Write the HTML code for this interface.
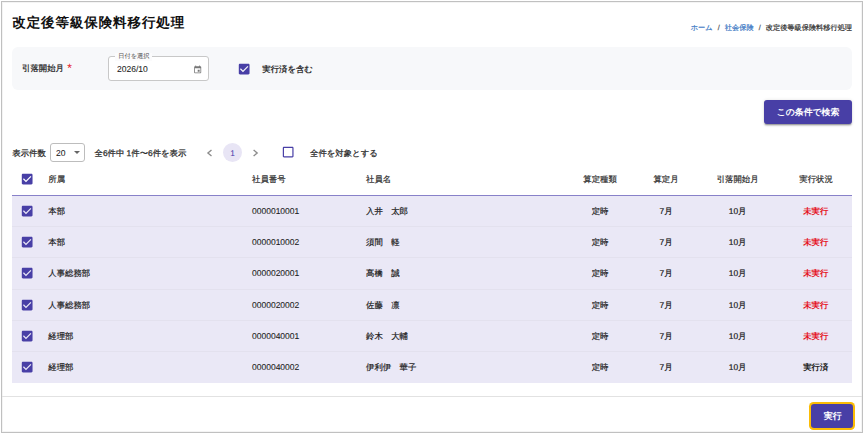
<!DOCTYPE html>
<html lang="ja">
<head>
<meta charset="utf-8">
<title>改定後等級保険料移行処理</title>
<style>
*{box-sizing:border-box;margin:0;padding:0}
html,body{width:865px;height:435px;background:#fff;overflow:hidden}
body{font-family:"Liberation Sans",sans-serif;text-rendering:geometricPrecision;-webkit-text-stroke:0.2px;color:#1c1c1c;position:relative;font-size:8.4px;line-height:1}
.abs{position:absolute;white-space:nowrap}
#frame{position:absolute;left:1px;top:1px;width:862px;height:432px;border:1px solid #c0c0c0;box-shadow:inset 0 0 0 1px #f4f4f4;background:#fff}
#title{left:12.3px;top:14.6px;font-size:13.5px;letter-spacing:0.9px;font-weight:bold;color:#111;line-height:15px}
#bc{right:13px;top:23.5px;font-size:7.2px;line-height:8px;color:#333}
#bc a{color:#3b78c4;text-decoration:none}
#bc .sep{margin:0 5.1px;color:#555}
#filter{left:12px;top:47px;width:840px;height:43px;background:#f7f8fa;border-radius:6px}
.lbl{color:#2a2a2a;-webkit-text-stroke:0.25px}
.b{font-weight:bold;color:#333}
#dinput{left:108px;top:56px;width:101px;height:24.5px;border:1px solid #c8c8c8;border-radius:3px;background:#fff}
#dlabel{left:115.3px;top:53px;width:37px;height:8px;background:#fbfbfc;font-size:6.2px;line-height:8px;color:#555;-webkit-text-stroke:0.05px;text-align:center}
#searchbtn{left:764px;top:100px;width:88px;height:23.5px;border-radius:3px;background:#483fa6;color:#fff;font-weight:bold;font-size:8.9px;line-height:24.8px;text-align:center;box-shadow:0 2.1px .7px -1.4px rgba(0,0,0,.2),0 1.4px 1.4px rgba(0,0,0,.14),0 .7px 3.5px rgba(0,0,0,.12)}
#sel{left:50px;top:143px;width:35px;height:18.5px;border:1px solid #bdbdbd;border-radius:3px;background:#fff}
#circ{left:223px;top:143.2px;width:19px;height:19px;border-radius:50%;background:#e8e5f5;color:#4338a8;text-align:center;line-height:20.6px;font-size:8.4px;-webkit-text-stroke:0}
.chev{stroke:#8c8c8c;stroke-width:1.35;fill:none}
#hline{left:12px;top:194.8px;width:840px;height:1px;background:#8881c9}
#tbody{left:12px;top:195.6px;width:840px;height:187px;background:#eae8f6}
.rsep{position:absolute;left:0;width:840px;height:1px;background:#e3e1ee}
.th{color:#333;-webkit-text-stroke:0.22px}
.c{transform:translateX(-50%)}
.red{color:#e5141f;font-weight:bold}
.done{color:#222;font-weight:bold}
#divider{left:2px;top:396px;width:860px;height:1px;background:#e2e2e2}
#runbtn{left:809.1px;top:402px;width:45.9px;height:27.8px;border-radius:4.6px;background:#fbbc05}
#runbtn i{position:absolute;left:1.5px;top:1.5px;right:1.5px;bottom:1.5px;border-radius:3.2px;background:#483fa6;color:#fff;font-style:normal;font-weight:bold;font-size:9px;line-height:25.2px;text-indent:1.2px;text-align:center;display:block}
.red,.done,.b,#title,#searchbtn,#runbtn i{-webkit-text-stroke:0}
svg{position:absolute;display:block}
</style>
</head>
<body>
<div id="frame"></div>
<div class="abs" id="title">改定後等級保険料移行処理</div>
<div class="abs" id="bc"><a>ホーム</a><span class="sep">/</span><a>社会保険</a><span class="sep">/</span>改定後等級保険料移行処理</div>

<div class="abs" id="filter"></div>
<div class="abs lbl" style="left:22px;top:63.6px">引落開始月<span style="color:#e5202a;-webkit-text-stroke:0;font-size:12px;position:absolute;left:45.3px;top:-1.2px">*</span></div>
<div class="abs" id="dinput"></div>
<div class="abs" id="dlabel">日付を選択</div>
<div class="abs" style="left:117px;top:64.8px;font-size:8.5px;-webkit-text-stroke:0.08px">2026/10</div>
<svg style="left:193px;top:64.6px" width="9.4" height="9.4" viewBox="0 0 24 24"><path fill="#777" d="M17 12h-5v5h5v-5zM16 1v2H8V1H6v2H5c-1.11 0-1.99.9-1.99 2L3 19c0 1.1.89 2 2 2h14c1.1 0 2-.9 2-2V5c0-1.1-.9-2-2-2h-1V1h-2zm3 18H5V8h14v11z"/></svg>
<svg style="left:237.2px;top:61.9px" width="14.33" height="14.33" viewBox="0 0 24 24"><path fill="#483fa6" d="M19 3H5c-1.11 0-2 .9-2 2v14c0 1.1.89 2 2 2h14c1.11 0 2-.9 2-2V5c0-1.1-.89-2-2-2zm-9 14l-5-5 1.41-1.41L10 14.17l7.59-7.59L19 8l-9 9z"/></svg>
<div class="abs b" style="left:262.3px;top:64.9px">実行済を含む</div>

<div class="abs" id="searchbtn">この条件で検索</div>

<div class="abs lbl" style="left:12.3px;top:148.8px">表示件数</div>
<div class="abs" id="sel"></div>
<div class="abs" style="left:56px;top:148.6px;font-size:8.5px;-webkit-text-stroke:0.08px">20</div>
<svg style="left:73.6px;top:151.4px" width="6" height="3.2" viewBox="0 0 10 5"><path fill="#666" d="M0 0h10L5 5z"/></svg>
<div class="abs lbl" style="left:94.5px;top:148.8px">全6件中 1件〜6件を表示</div>
<svg style="left:206px;top:147.75px" width="8" height="10" viewBox="0 0 8 10"><path class="chev" d="M5.5 1.9 1.9 5l3.6 3.1"/></svg>
<div class="abs" id="circ">1</div>
<svg style="left:251.5px;top:147.75px" width="8" height="10" viewBox="0 0 8 10"><path class="chev" d="M1.6 1.9 5.2 5 1.6 8.1"/></svg>
<svg style="left:281.2px;top:145px" width="14.33" height="14.33" viewBox="0 0 24 24"><path fill="#483fa6" d="M19 5v14H5V5h14m0-2H5c-1.1 0-2 .9-2 2v14c0 1.1.9 2 2 2h14c1.1 0 2-.9 2-2V5c0-1.1-.9-2-2-2z"/></svg>
<div class="abs lbl" style="left:310px;top:148.8px">全件を対象とする</div>

<!-- table header -->
<svg style="left:20.2px;top:171.6px" width="14.33" height="14.33" viewBox="0 0 24 24"><path fill="#483fa6" d="M19 3H5c-1.11 0-2 .9-2 2v14c0 1.1.89 2 2 2h14c1.11 0 2-.9 2-2V5c0-1.1-.89-2-2-2zm-9 14l-5-5 1.41-1.41L10 14.17l7.59-7.59L19 8l-9 9z"/></svg>
<div class="abs th" style="left:48.3px;top:175px">所属</div>
<div class="abs th" style="left:252px;top:175px">社員番号</div>
<div class="abs th" style="left:366px;top:175px">社員名</div>
<div class="abs th c" style="left:600px;top:175px">算定種類</div>
<div class="abs th c" style="left:666px;top:175px">算定月</div>
<div class="abs th c" style="left:737.6px;top:175px">引落開始月</div>
<div class="abs th c" style="left:816px;top:175px">実行状況</div>
<div class="abs" id="hline"></div>
<div class="abs" id="tbody">
<div class="rsep" style="top:30.6px"></div>
<div class="rsep" style="top:61.8px"></div>
<div class="rsep" style="top:93px"></div>
<div class="rsep" style="top:124.2px"></div>
<div class="rsep" style="top:155.4px"></div>
</div>
<svg style="left:20.2px;top:204.03px" width="14.33" height="14.33" viewBox="0 0 24 24"><path fill="#483fa6" d="M19 3H5c-1.11 0-2 .9-2 2v14c0 1.1.89 2 2 2h14c1.11 0 2-.9 2-2V5c0-1.1-.89-2-2-2zm-9 14l-5-5 1.41-1.41L10 14.17l7.59-7.59L19 8l-9 9z"/></svg>
<div class="abs" style="left:48.3px;top:206.90px">本部</div>
<div class="abs" style="left:252px;top:206.90px;font-size:8.5px;-webkit-text-stroke:0.08px">0000010001</div>
<div class="abs" style="left:366px;top:206.90px">入井　太郎</div>
<div class="abs c" style="left:600px;top:206.90px">定時</div>
<div class="abs c" style="left:666px;top:206.90px">7月</div>
<div class="abs c" style="left:737.6px;top:206.90px">10月</div>
<div class="abs c red" style="left:815.8px;top:206.90px">未実行</div>
<svg style="left:20.2px;top:235.23px" width="14.33" height="14.33" viewBox="0 0 24 24"><path fill="#483fa6" d="M19 3H5c-1.11 0-2 .9-2 2v14c0 1.1.89 2 2 2h14c1.11 0 2-.9 2-2V5c0-1.1-.89-2-2-2zm-9 14l-5-5 1.41-1.41L10 14.17l7.59-7.59L19 8l-9 9z"/></svg>
<div class="abs" style="left:48.3px;top:238.10px">本部</div>
<div class="abs" style="left:252px;top:238.10px;font-size:8.5px;-webkit-text-stroke:0.08px">0000010002</div>
<div class="abs" style="left:366px;top:238.10px">須間　軽</div>
<div class="abs c" style="left:600px;top:238.10px">定時</div>
<div class="abs c" style="left:666px;top:238.10px">7月</div>
<div class="abs c" style="left:737.6px;top:238.10px">10月</div>
<div class="abs c red" style="left:815.8px;top:238.10px">未実行</div>
<svg style="left:20.2px;top:266.43px" width="14.33" height="14.33" viewBox="0 0 24 24"><path fill="#483fa6" d="M19 3H5c-1.11 0-2 .9-2 2v14c0 1.1.89 2 2 2h14c1.11 0 2-.9 2-2V5c0-1.1-.89-2-2-2zm-9 14l-5-5 1.41-1.41L10 14.17l7.59-7.59L19 8l-9 9z"/></svg>
<div class="abs" style="left:48.3px;top:269.30px">人事総務部</div>
<div class="abs" style="left:252px;top:269.30px;font-size:8.5px;-webkit-text-stroke:0.08px">0000020001</div>
<div class="abs" style="left:366px;top:269.30px">髙橋　誠</div>
<div class="abs c" style="left:600px;top:269.30px">定時</div>
<div class="abs c" style="left:666px;top:269.30px">7月</div>
<div class="abs c" style="left:737.6px;top:269.30px">10月</div>
<div class="abs c red" style="left:815.8px;top:269.30px">未実行</div>
<svg style="left:20.2px;top:297.63px" width="14.33" height="14.33" viewBox="0 0 24 24"><path fill="#483fa6" d="M19 3H5c-1.11 0-2 .9-2 2v14c0 1.1.89 2 2 2h14c1.11 0 2-.9 2-2V5c0-1.1-.89-2-2-2zm-9 14l-5-5 1.41-1.41L10 14.17l7.59-7.59L19 8l-9 9z"/></svg>
<div class="abs" style="left:48.3px;top:300.50px">人事総務部</div>
<div class="abs" style="left:252px;top:300.50px;font-size:8.5px;-webkit-text-stroke:0.08px">0000020002</div>
<div class="abs" style="left:366px;top:300.50px">佐藤　凛</div>
<div class="abs c" style="left:600px;top:300.50px">定時</div>
<div class="abs c" style="left:666px;top:300.50px">7月</div>
<div class="abs c" style="left:737.6px;top:300.50px">10月</div>
<div class="abs c red" style="left:815.8px;top:300.50px">未実行</div>
<svg style="left:20.2px;top:328.83px" width="14.33" height="14.33" viewBox="0 0 24 24"><path fill="#483fa6" d="M19 3H5c-1.11 0-2 .9-2 2v14c0 1.1.89 2 2 2h14c1.11 0 2-.9 2-2V5c0-1.1-.89-2-2-2zm-9 14l-5-5 1.41-1.41L10 14.17l7.59-7.59L19 8l-9 9z"/></svg>
<div class="abs" style="left:48.3px;top:331.70px">経理部</div>
<div class="abs" style="left:252px;top:331.70px;font-size:8.5px;-webkit-text-stroke:0.08px">0000040001</div>
<div class="abs" style="left:366px;top:331.70px">鈴木　大輔</div>
<div class="abs c" style="left:600px;top:331.70px">定時</div>
<div class="abs c" style="left:666px;top:331.70px">7月</div>
<div class="abs c" style="left:737.6px;top:331.70px">10月</div>
<div class="abs c red" style="left:815.8px;top:331.70px">未実行</div>
<svg style="left:20.2px;top:360.03px" width="14.33" height="14.33" viewBox="0 0 24 24"><path fill="#483fa6" d="M19 3H5c-1.11 0-2 .9-2 2v14c0 1.1.89 2 2 2h14c1.11 0 2-.9 2-2V5c0-1.1-.89-2-2-2zm-9 14l-5-5 1.41-1.41L10 14.17l7.59-7.59L19 8l-9 9z"/></svg>
<div class="abs" style="left:48.3px;top:362.90px">経理部</div>
<div class="abs" style="left:252px;top:362.90px;font-size:8.5px;-webkit-text-stroke:0.08px">0000040002</div>
<div class="abs" style="left:366px;top:362.90px">伊利伊　華子</div>
<div class="abs c" style="left:600px;top:362.90px">定時</div>
<div class="abs c" style="left:666px;top:362.90px">7月</div>
<div class="abs c" style="left:737.6px;top:362.90px">10月</div>
<div class="abs c done" style="left:815.8px;top:362.90px">実行済</div>
<div class="abs" id="divider"></div>
<div class="abs" id="runbtn"><i>実行</i></div>
</body>
</html>
